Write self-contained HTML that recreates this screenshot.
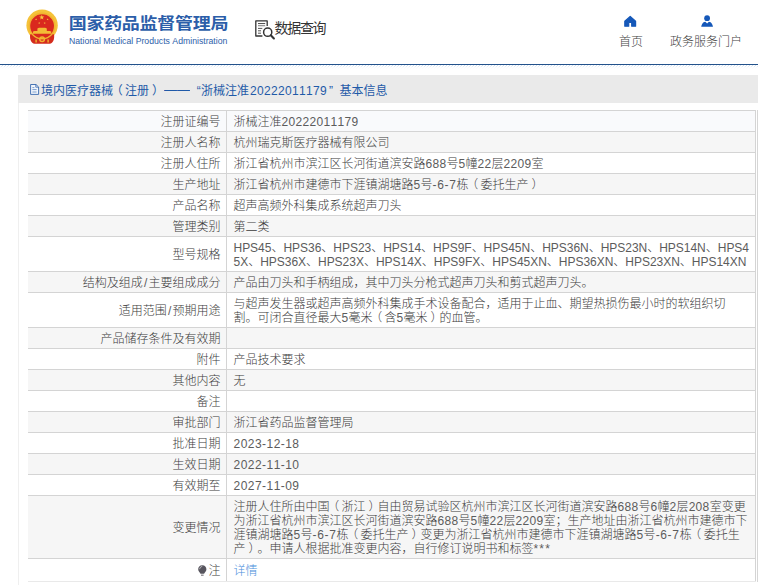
<!DOCTYPE html>
<html lang="zh-CN">
<head>
<meta charset="utf-8">
<title>国家药品监督管理局 数据查询</title>
<style>
*{box-sizing:border-box;margin:0;padding:0}
html,body{width:758px;height:585px;overflow:hidden;background:#fff}
body{font-family:"Liberation Sans","Noto Sans CJK SC",sans-serif;font-size:12px;color:#444;position:relative;font-kerning:none;text-spacing-trim:space-all;font-variant-ligatures:none}
.abs{position:absolute}
#hdrline{left:0;top:64px;width:758px;height:1px;background:#23528b}
#hatch{left:0;top:65px;width:758px;height:4px;background:linear-gradient(to bottom,rgba(255,255,255,0) 0,rgba(255,255,255,.1) 1px,rgba(255,255,255,.8) 2px,rgba(255,255,255,.95) 4px),repeating-linear-gradient(135deg,#cfdff0 0,#cfdff0 .7px,#fff .7px,#fff 2.12px)}
#logo-cn{left:68.7px;top:9px;font-size:18px;font-weight:bold;color:#2c5ea9;line-height:26px;white-space:nowrap;letter-spacing:-.28px;transform-origin:0 100%;transform:scaleY(.885)}
#logo-en{left:69px;top:35px;font-size:8.7px;color:#2c5ea9;line-height:12px;white-space:nowrap}
#dq{left:274.6px;top:18px;font-size:14px;color:#333;line-height:20px;white-space:nowrap;letter-spacing:-1.35px}
.nav{font-size:12px;color:#444;font-weight:300;line-height:16px;white-space:nowrap;text-align:center}
#panel{left:18px;top:75px;width:760px;height:520px;border-left:1px solid #efefef;background:#fff}
#phead{left:18px;top:75px;width:760px;height:28px;background:#eaeaea}
.pt{top:83px;font-size:12px;line-height:16px;color:#1f5aa8;white-space:nowrap}
table{position:absolute;left:28px;top:110px;width:728px;border-collapse:collapse;table-layout:fixed}
td{border:1px solid #d4d4d4;padding:4px 0 2px 7px;line-height:14px;font-size:12px;vertical-align:middle;color:#3c3c3c;font-weight:300;white-space:nowrap;overflow:hidden}
td.l{width:198px;text-align:right;padding-right:5px;padding-left:0;border-left:0}
tr:nth-child(even) td{background:#f6f6f6}
tr:first-child td{background:#f9fafc}
tr:last-child td{padding-top:5px;padding-bottom:3px;border-bottom-color:#e9e9e9}
a{color:#4a8fdc;text-decoration:none}
.e{color:#5c5c5c}
.sl{padding:0 1.2px;color:#5c5c5c}
.pl{position:relative;left:-2.4px}
.pr{position:relative;left:3px}
</style>
</head>
<body>
<svg class="abs" style="left:22px;top:6px" width="40" height="42" viewBox="0 0 40 42">
  <circle cx="20.1" cy="19.3" r="15.7" fill="#f5c239"/>
  <path d="M8.2 28.3C7.4 32.5 9 37.7 12.6 37.7H27.6C31.2 37.7 32.8 32.5 32 28.3Z" fill="#d42c1d"/>
  <circle cx="20.1" cy="20" r="12.7" fill="none" stroke="#f1b431" stroke-width="1.5"/>
  <circle cx="20.1" cy="20.1" r="11.9" fill="#da291e"/>
  <polygon points="19.80,8.70 20.43,10.53 22.37,10.57 20.83,11.73 21.39,13.58 19.80,12.48 18.21,13.58 18.77,11.73 17.23,10.57 19.17,10.53" fill="#f7c83e"/>
  <polygon points="14.10,12.30 14.36,13.04 15.15,13.06 14.52,13.54 14.75,14.29 14.10,13.84 13.45,14.29 13.68,13.54 13.05,13.06 13.84,13.04" fill="#f7c83e"/>
  <polygon points="25.60,12.30 25.86,13.04 26.65,13.06 26.02,13.54 26.25,14.29 25.60,13.84 24.95,14.29 25.18,13.54 24.55,13.06 25.34,13.04" fill="#f7c83e"/>
  <polygon points="17.20,15.90 17.46,16.64 18.25,16.66 17.62,17.14 17.85,17.89 17.20,17.44 16.55,17.89 16.78,17.14 16.15,16.66 16.94,16.64" fill="#f7c83e"/>
  <polygon points="22.70,15.90 22.96,16.64 23.75,16.66 23.12,17.14 23.35,17.89 22.70,17.44 22.05,17.89 22.28,17.14 21.65,16.66 22.44,16.64" fill="#f7c83e"/>
  <path d="M15.4 24.9V22.6L17 21.8H23.2L24.8 22.6V24.9Z" fill="#f3bb36"/>
  <path d="M11 27.7V25.6L12.5 25H27.7L29.2 25.6V27.7Z" fill="#f3bb36"/>
  <circle cx="20.1" cy="33.3" r="2.3" fill="none" stroke="#f1b431" stroke-width="1.5"/>
  <path d="M13.4 33.6h1.4v3h-1.4zM25.4 33.6h1.4v3h-1.4z" fill="#f1b431"/>
</svg>
<div class="abs" id="logo-cn">国家药品监督管理局</div>
<div class="abs" id="logo-en">National Medical Products Administration</div>

<svg class="abs" style="left:255px;top:20px" width="22" height="21" viewBox="0 0 22 21" fill="none" stroke="#333" stroke-width="1.3">
  <path d="M12.2 6V0.9H0.8V16H7.4" stroke-linejoin="round"/>
  <path d="M3 3.5H10.2M3 8.4H7.3M3 10.8H6M3 13.2H6" stroke-width="1" stroke="#555"/>
  <path d="M3 5.6H10.2" stroke-width="1.4" stroke="#999"/>
  <circle cx="12.7" cy="12.2" r="4.1" stroke-width="1.5" fill="#fff"/>
  <path d="M15.8 15.3L18.9 18.4" stroke-width="2.1" stroke-linecap="round"/>
</svg>
<div class="abs" id="dq">数据查询</div>

<svg class="abs" style="left:624px;top:14.7px" width="13" height="12" viewBox="0 0 13 12"><path d="M6.2 1.4L0.8 6.2V11.2H4.7V7.5H7.7V11.2H11.6V6.2Z" fill="#1558b9" stroke="#1558b9" stroke-width="1.2" stroke-linejoin="round"/></svg>
<div class="abs nav" style="left:607px;top:34px;width:48px">首页</div>
<svg class="abs" style="left:700px;top:15px" width="14" height="12" viewBox="0 0 14 12"><circle cx="7.1" cy="3.2" r="2.9" fill="#1558b9"/><path d="M1.2 11.7C1.6 9.6 2.6 7.9 3.6 7.2Q4.3 6.7 5.3 6.7L7.1 8.4L8.9 6.7Q9.9 6.7 10.6 7.2C11.6 7.9 12.6 9.6 13 11.7Z" fill="#1558b9"/></svg>
<div class="abs nav" style="left:660px;top:34px;width:92px">政务服务门户</div>

<div class="abs" id="hdrline"></div>
<div class="abs" id="hatch"></div>

<div class="abs" id="panel"></div>
<div class="abs" id="phead"></div>
<svg class="abs" style="left:29.5px;top:84px" width="10" height="11" viewBox="0 0 10 11" fill="none" stroke="#3566ad" stroke-width=".9"><path d="M0.6 0.5H6L8.6 3V10.4H0.6Z" fill="#f3f7fc"/><path d="M5.8 0.6V3.2H8.5" stroke-width=".8"/><path d="M2.4 3.6H4.4M2.4 5.6H6.6M2.4 8H6.6" stroke="#6d93c8" stroke-width=".9"/></svg>
<div class="abs pt" id="t1" style="left:41px">境内医疗器械<span class="pl">（</span>注册<span class="pr">）</span></div>
<div class="abs pt" id="t2" style="left:163.7px;top:82px;transform-origin:0 50%;transform:scaleX(1.08)">——</div>
<div class="abs pt" id="t3" style="left:196.7px">“</div>
<div class="abs pt" id="t4" style="left:201px">浙械注准<span style="letter-spacing:.326px;margin-left:1px">20222011179</span></div>
<div class="abs pt" id="t5" style="left:329px">”</div>
<div class="abs pt" id="t6" style="left:339.5px">基本信息</div>

<div class="abs" style="left:757px;top:110px;width:1px;height:472px;background:#d6d6d6"></div>
<table>
<colgroup><col style="width:198px"><col></colgroup>
<tr><td class="l">注册证编号</td><td><span class="ln" id="r1l1">浙械注准<span class="e" style="letter-spacing:0.326px">20222011179</span></span></td></tr>
<tr><td class="l">注册人名称</td><td><span class="ln" id="r2l1">杭州瑞克斯医疗器械有限公司</span></td></tr>
<tr><td class="l">注册人住所</td><td><span class="ln" id="r3l1">浙江省杭州市滨江区长河街道滨安路<span class="e" style="letter-spacing:0.326px">688</span>号<span class="e" style="letter-spacing:0.326px">5</span>幢<span class="e" style="letter-spacing:0.326px">22</span>层<span class="e" style="letter-spacing:0.326px">2209</span>室</span></td></tr>
<tr><td class="l">生产地址</td><td><span class="ln" id="r4l1">浙江省杭州市建德市下涯镇湖塘路<span class="e" style="letter-spacing:0.326px">5</span>号<span class="e" style="letter-spacing:0.665px">-6-7</span>栋<span class="pl">（</span>委托生产<span class="pr">）</span></span></td></tr>
<tr><td class="l">产品名称</td><td><span class="ln" id="r5l1">超声高频外科集成系统超声刀头</span></td></tr>
<tr><td class="l">管理类别</td><td><span class="ln" id="r6l1">第二类</span></td></tr>
<tr><td class="l">型号规格</td><td><span class="ln" id="r7l1" style="letter-spacing:-0.024px"><span class="e">HPS45</span>、<span class="e">HPS36</span>、<span class="e">HPS23</span>、<span class="e">HPS14</span>、<span class="e">HPS9F</span>、<span class="e">HPS45N</span>、<span class="e">HPS36N</span>、<span class="e">HPS23N</span>、<span class="e">HPS14N</span>、<span class="e">HPS4</span></span><br><span class="ln" id="r7l2" style="letter-spacing:-0.023px"><span class="e">5X</span>、<span class="e">HPS36X</span>、<span class="e">HPS23X</span>、<span class="e">HPS14X</span>、<span class="e">HPS9FX</span>、<span class="e">HPS45XN</span>、<span class="e">HPS36XN</span>、<span class="e">HPS23XN</span>、<span class="e">HPS14XN</span></span></td></tr>
<tr><td class="l">结构及组成<span class="sl">/</span>主要组成成分</td><td><span class="ln" id="r8l1">产品由刀头和手柄组成，其中刀头分枪式超声刀头和剪式超声刀头。</span></td></tr>
<tr><td class="l">适用范围<span class="sl">/</span>预期用途</td><td><span class="ln" id="r9l1">与超声发生器或超声高频外科集成手术设备配合，适用于止血、期望热损伤最小时的软组织切</span><br><span class="ln" id="r9l2">割。可闭合直径最大<span class="e" style="letter-spacing:0.326px">5</span>毫米<span class="pl">（</span>含<span class="e" style="letter-spacing:0.326px">5</span>毫米<span class="pr">）</span>的血管。</span></td></tr>
<tr><td class="l">产品储存条件及有效期</td><td><span class="ln" id="r10l1"></span></td></tr>
<tr><td class="l">附件</td><td><span class="ln" id="r11l1">产品技术要求</span></td></tr>
<tr><td class="l">其他内容</td><td><span class="ln" id="r12l1">无</span></td></tr>
<tr><td class="l">备注</td><td><span class="ln" id="r13l1"></span></td></tr>
<tr><td class="l">审批部门</td><td><span class="ln" id="r14l1">浙江省药品监督管理局</span></td></tr>
<tr><td class="l">批准日期</td><td><span class="ln" id="r15l1"><span class="e" style="letter-spacing:0.462px">2023-12-18</span></span></td></tr>
<tr><td class="l">生效日期</td><td><span class="ln" id="r16l1"><span class="e" style="letter-spacing:0.462px">2022-11-10</span></span></td></tr>
<tr><td class="l">有效期至</td><td><span class="ln" id="r17l1"><span class="e" style="letter-spacing:0.462px">2027-11-09</span></span></td></tr>
<tr><td class="l">变更情况</td><td><span class="ln" id="r18l1">注册人住所由中国<span class="pl">（</span>浙江<span class="pr">）</span>自由贸易试验区杭州市滨江区长河街道滨安路<span class="e" style="letter-spacing:0.326px">688</span>号<span class="e" style="letter-spacing:0.326px">6</span>幢<span class="e" style="letter-spacing:0.326px">2</span>层<span class="e" style="letter-spacing:0.326px">208</span>室变更</span><br><span class="ln" id="r18l2">为浙江省杭州市滨江区长河街道滨安路<span class="e" style="letter-spacing:0.326px">688</span>号<span class="e" style="letter-spacing:0.326px">5</span>幢<span class="e" style="letter-spacing:0.326px">22</span>层<span class="e" style="letter-spacing:0.326px">2209</span>室；生产地址由浙江省杭州市建德市下</span><br><span class="ln" id="r18l3">涯镇湖塘路<span class="e" style="letter-spacing:0.326px">5</span>号<span class="e" style="letter-spacing:0.665px">-6-7</span>栋<span class="pl">（</span>委托生产<span class="pr">）</span>变更为浙江省杭州市建德市下涯镇湖塘路<span class="e" style="letter-spacing:0.326px">5</span>号<span class="e" style="letter-spacing:0.665px">-6-7</span>栋<span class="pl">（</span>委托生</span><br><span class="ln" id="r18l4">产<span class="pr">）</span>。申请人根据批准变更内容，自行修订说明书和标签<span class="e" style="letter-spacing:1.130px">***</span></span></td></tr>
<tr><td class="l"><svg width="9" height="11" viewBox="0 0 9 11" style="vertical-align:-1px;margin-right:1.2px"><path d="M4.3 0.2C6.9 0.2 8.4 2.1 8.4 4.2C8.4 6.3 6.7 7.2 6.1 8.8H2.5C1.9 7.2 0.2 6.3 0.2 4.2C0.2 2.1 1.7 0.2 4.3 0.2Z" fill="#57555e"/><path d="M1.7 4.2C1.7 2.7 2.7 1.6 4.2 1.5" fill="none" stroke="#fff" stroke-opacity=".75" stroke-width=".8"/><rect x="3" y="9.7" width="2.6" height=".9" fill="#57555e"/></svg>注</td><td><a id="r19l1" class="ln">详情</a></td></tr>
</table>
</body>
</html>
